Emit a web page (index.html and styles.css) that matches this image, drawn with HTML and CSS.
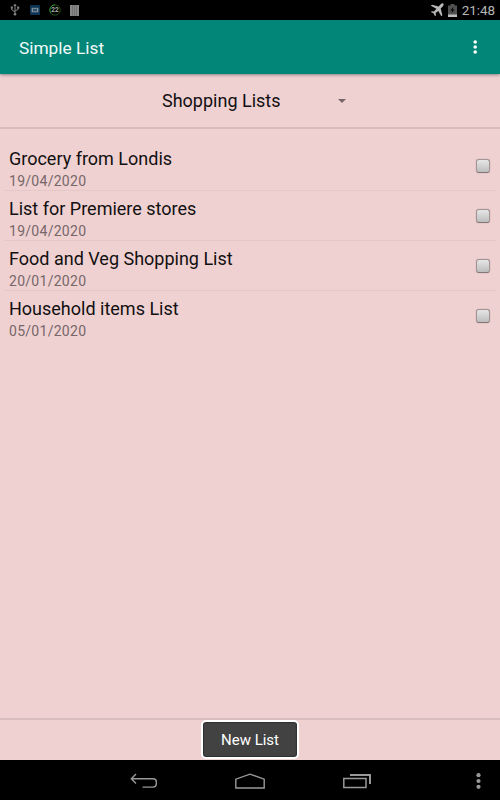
FILE: index.html
```html
<!DOCTYPE html>
<html lang="en">
<head>
  <meta charset="UTF-8" />
  <meta name="viewport" content="width=device-width, initial-scale=1.0" />
  <title>Simple List</title>
  <link rel="stylesheet" href="styles.css">
</head>
<body>
  <div class="screen">
    <div class="status-bar">
      <div class="notifications">
        <svg width="10" height="14" viewBox="0 0 10 14" fill="none" stroke="#858585" stroke-width="1">
          <path d="M5 2v9M1.8 4.5v2.3L5 9M8.2 4.5v1.8L5 8" />
          <path d="M5 .5L3.3 3h3.4z" fill="#858585" stroke="none" />
          <circle cx="5" cy="11.2" r="1.3" fill="#858585" stroke="none" />
          <path d="M.8 3.6h2v2h-2zM7.2 3.6h2v2h-2z" fill="#858585" stroke="none" />
        </svg>
        <svg width="10" height="10" viewBox="0 0 10 10">
          <rect width="10" height="10" rx=".5" fill="#0d3354" />
          <rect x="1.6" y="2.8" width="6.8" height="4.5" fill="#80909c" />
          <path d="M3.8 3.7v2.7M6.2 3.7v2.7M3.8 5h2.4" stroke="#0d3354" />
        </svg>
        <svg class="battery-icon" width="12" height="12" viewBox="0 0 12 12">
          <circle cx="6" cy="6" r="5.2" fill="none" stroke="#1d4d17" />
          <path d="M2 9.3A5.2 5.2 0 0 1 6 .8" fill="none" stroke="#398b2a" />
          <text x="6" y="8.4" class="battery-percent">22</text>
        </svg>
        <svg width="9" height="11" viewBox="0 0 9 11">
          <rect width="9" height="11" fill="#888" />
          <path d="M2.5 0v11M4.5 0v11M6.5 0v11" stroke="#5c5c5c" stroke-width=".5" />
        </svg>
      </div>
      <div class="system-icons">
        <svg width="14" height="14" viewBox="0 0 14 14" fill="#b8b8b8">
          <path d="M13.2.6c-.7-.6-1.6-.2-2.3.5L8.7 3.5 2 1.8l-1.1 1 5.5 3L4 8.5l-2.2-.3-.9.9 2.8 1.4 1.3 2.8.9-.9-.2-2.3L8.3 8l3 5.3 1.1-1.1-1.7-6.6 2.2-2.3c.7-.7 1-2 .3-2.7z" />
        </svg>
        <svg width="9" height="13" viewBox="0 0 9 13">
          <path d="M0 1.5h2.5V0h4v1.5H9V13H0z" fill="#515151" />
          <path d="M0 10.5h9V13H0z" fill="#bdbdbd" />
          <path d="M5.5 2.8L2.2 6.5h2L3.5 9.3l3.3-3.9h-2z" fill="#090909" />
        </svg>
        <span class="clock">21:48</span>
      </div>
    </div>

    <div class="app-bar">
      <h1 class="app-title">Simple List</h1>
      <svg width="4" height="14" viewBox="0 0 4 14" fill="#fff">
        <circle cx="2.2" cy="2" r="1.8" />
        <circle cx="2.2" cy="7" r="1.8" />
        <circle cx="2.2" cy="12" r="1.8" />
      </svg>
    </div>

    <div class="spinner">
      <span class="spinner-label">Shopping Lists</span>
      <svg width="8" height="4" viewBox="0 0 8 4"><path d="M0 0h8L4 4z" fill="#756668" /></svg>
    </div>

    <div class="lists">
      <label class="list-row">
        <span class="list-text">
          <span class="list-name">Grocery from Londis</span>
          <span class="list-date">19/04/2020</span>
        </span>
        <input type="checkbox" class="list-check">
      </label>
      <label class="list-row">
        <span class="list-text">
          <span class="list-name">List for Premiere stores</span>
          <span class="list-date">19/04/2020</span>
        </span>
        <input type="checkbox" class="list-check">
      </label>
      <label class="list-row">
        <span class="list-text">
          <span class="list-name">Food and Veg Shopping List</span>
          <span class="list-date">20/01/2020</span>
        </span>
        <input type="checkbox" class="list-check">
      </label>
      <label class="list-row">
        <span class="list-text">
          <span class="list-name">Household items List</span>
          <span class="list-date">05/01/2020</span>
        </span>
        <input type="checkbox" class="list-check">
      </label>
    </div>

    <div class="bottom-bar">
      <button class="new-list">New List</button>
    </div>

    <div class="nav-bar">
      <svg width="28" height="16" viewBox="0 0 28 16" fill="none" stroke="#999" stroke-width="1.4">
        <path d="M6 1L1.3 5.8 6 10.6M1.5 5.8H23q3.3 0 3.3 3v2.3q0 3-3.3 3H12.5" />
      </svg>
      <svg width="30" height="16" viewBox="0 0 30 16" fill="none" stroke="#999" stroke-width="1.4">
        <path d="M.8 15V6.2L15 1.2l14.2 5V15z" />
      </svg>
      <svg class="nav-recents" width="28" height="16" viewBox="0 0 28 16" fill="none" stroke="#999">
        <rect x=".8" y="5.5" width="22.2" height="9" stroke-width="1.5" />
        <path d="M7 2h20v9" stroke-width="2" />
      </svg>
      <svg class="nav-menu" width="5" height="16" viewBox="0 0 5 16" fill="#999">
        <circle cx="2.5" cy="2.2" r="2.1" />
        <circle cx="2.5" cy="8" r="2.1" />
        <circle cx="2.5" cy="13.8" r="2.1" />
      </svg>
    </div>
  </div>
</body>
</html>
```

FILE: styles.css
```css
:root {
  --bg: #efd1d2;
  --primary: #018677;
  --line: #d8bdbe;
  --button: #424242;
}

* {
  box-sizing: border-box;
}

body {
  margin: 0;
  font-family: Roboto, sans-serif;
  background: #000;
}

svg {
  display: block;
}

.screen {
  width: 500px;
  height: 800px;
  display: flex;
  flex-direction: column;
  background: var(--bg);
  overflow: hidden;
}

.status-bar {
  height: 20px;
  padding: 0 5px 0 10px;
  display: flex;
  align-items: center;
  justify-content: space-between;
  background: #000;
}

.notifications {
  display: grid;
  grid-template-columns: repeat(4, 20px);
  align-items: center;
}

.battery-icon {
  margin-left: -1px;
}

.battery-percent {
  font-size: 6.5px;
  font-weight: bold;
  text-anchor: middle;
  fill: #a5b0a4;
}

.system-icons {
  display: flex;
  align-items: center;
  gap: 4px;
}

.clock {
  margin-left: 1px;
  font-size: 13.4px;
  line-height: 20px;
  padding-top: 2px;
  color: #b8b8b8;
}

.app-bar {
  height: 54px;
  padding: 0 23px 0 19px;
  display: flex;
  align-items: center;
  justify-content: space-between;
  background: var(--primary);
  box-shadow: 0 1px 3px rgba(0, 0, 0, 0.4);
}

.app-title {
  margin: 0;
  padding-top: 2px;
  font-size: 17.3px;
  font-weight: 400;
  color: #f3faf9;
}

.spinner {
  height: 55px;
  padding: 0 154px 0 162px;
  display: flex;
  align-items: center;
  justify-content: space-between;
  border-bottom: 2px solid var(--line);
}

.spinner-label {
  font-size: 18px;
  color: #121010;
}

.lists {
  flex: 1;
  padding: 12px 4px 0;
}

.list-row {
  height: 50px;
  padding: 0 6px 0 5px;
  display: flex;
  align-items: center;
  justify-content: space-between;
  border-bottom: 1px solid #e4c7c8;
}

.list-row:last-child {
  border-bottom-color: transparent;
}

.list-text {
  display: flex;
  flex-direction: column;
  padding-top: 7px;
}

.list-name {
  font-size: 18px;
  line-height: 22px;
  color: #121010;
}

.list-date {
  font-size: 14px;
  letter-spacing: 0.28px;
  line-height: 20px;
  padding-top: 1px;
  color: #766769;
}

.list-check {
  appearance: none;
  width: 14px;
  height: 14px;
  margin: 0;
  border: 1px solid #a29394;
  border-bottom-color: #827576;
  border-radius: 3px;
  background: linear-gradient(#e6e6e6, #bdbdbd);
  box-shadow: 0 0 1px rgba(80, 50, 50, 0.5);
}

.bottom-bar {
  height: 42px;
  display: flex;
  justify-content: center;
  border-top: 2px solid var(--line);
}

.new-list {
  width: 98px;
  height: 39px;
  padding: 1px 0 0;
  font-family: inherit;
  font-size: 15px;
  color: #fff;
  background: var(--button);
  border: 2px solid #fff;
  border-radius: 5px;
  box-shadow: inset 0 0 1px 1px #303030;
}

.nav-bar {
  height: 40px;
  padding: 1px 19px 0 130px;
  display: flex;
  align-items: center;
  gap: 77px;
  background: #000;
}

.nav-recents {
  margin-left: 1px;
}

.nav-menu {
  margin-left: auto;
}
```
